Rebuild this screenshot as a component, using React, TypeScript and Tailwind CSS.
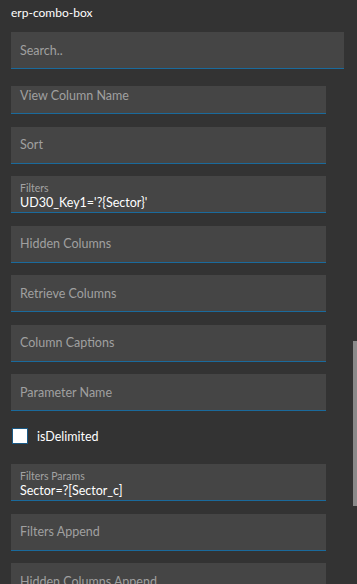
import React from 'react';

type Field = { kind: 'field'; label: string; value?: string } | { kind: 'check'; label: string };

const fields: Field[] = [
  { kind: 'field', label: 'View Column Name' },
  { kind: 'field', label: 'Sort' },
  { kind: 'field', label: 'Filters', value: "UD30_Key1='?{Sector}'" },
  { kind: 'field', label: 'Hidden Columns' },
  { kind: 'field', label: 'Retrieve Columns' },
  { kind: 'field', label: 'Column Captions' },
  { kind: 'field', label: 'Parameter Name' },
  { kind: 'check', label: 'isDelimited' },
  { kind: 'field', label: 'Filters Params', value: 'Sector=?[Sector_c]' },
  { kind: 'field', label: 'Filters Append' },
  { kind: 'field', label: 'Hidden Columns Append' },
  { kind: 'field', label: 'Retrieve Columns Append' },
];

function TextBox({ label, value }: { label: string; value?: string }) {
  if (value) {
    return (
      <div className="flex h-[37px] shrink-0 flex-col border-b border-[#1a6a9c] bg-[#454545] pl-[9px] pt-[6px]">
        <span className="text-[10.5px] leading-[13px] text-[#a3a3a3]">{label}</span>
        <span className="text-[12.5px] leading-[16px] text-white">{value}</span>
      </div>
    );
  }
  return (
    <div className="flex h-[37px] shrink-0 items-center border-b border-[#1a6a9c] bg-[#454545] pl-[9px] pt-[2px]">
      <span className="text-[12.5px] text-[#a0a0a0]">{label}</span>
    </div>
  );
}

export default function App() {
  return (
    <div className="relative h-[584px] w-[357px] overflow-hidden bg-[#333333] font-['Lato',sans-serif]">
      <div className="px-[11px] pt-[5px] text-[12px] leading-[16px] text-white">erp-combo-box</div>
      <div className="mx-[11px] mt-[11px] flex h-[37px] w-[333px] items-center border-b border-[#1a6a9c] bg-[#454545] pl-[9px] pt-[2px]">
        <span className="text-[12.5px] text-[#a0a0a0]">Search..</span>
      </div>
      <div className="mt-[17px] h-[498px] overflow-hidden">
        <div className="-mt-[9px] flex w-[326px] flex-col gap-[12.5px] pl-[11px]">
          {fields.map((f) =>
            f.kind === 'check' ? (
              <div key={f.label} className="flex h-[28px] shrink-0 items-center gap-[9px] pl-[1px]">
                <span className="mb-[3px] h-[16px] w-[16px] border border-[#1a5a86] bg-white" />
                <span className="mb-[1px] text-[12.5px] text-white">{f.label}</span>
              </div>
            ) : (
              <TextBox key={f.label} label={f.label} value={f.value} />
            )
          )}
        </div>
      </div>
      <div className="absolute right-0 top-[341px] h-[165px] w-[4px] bg-[#8a8a8a]" />
    </div>
  );
}
